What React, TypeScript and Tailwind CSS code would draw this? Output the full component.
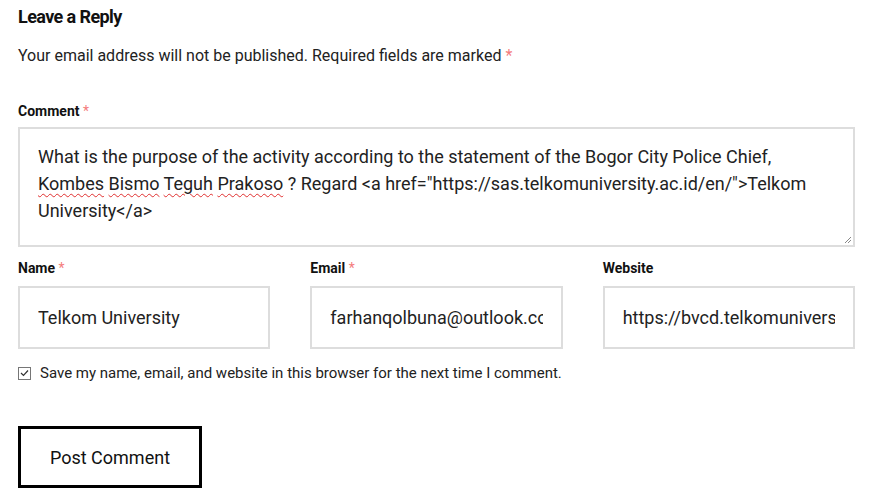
import React from "react";

const Req = () => <span className="text-[#f47c7c] font-normal"> *</span>;

const Field = ({ label, required, value }: { label: string; required?: boolean; value: string }) => (
  <div className="flex flex-col">
    <label className="text-[14px] leading-[20px] font-bold text-[#111] mb-[8px]">
      {label}
      {required && <Req />}
    </label>
    <input
      readOnly
      value={value}
      className="h-[63px] w-full border-2 border-[#dddddd] bg-white px-[18px] text-[18px] text-[#222] outline-none"
    />
  </div>
);

const Typo = ({ children }: { children: React.ReactNode }) => (
  <span className="underline decoration-wavy decoration-[#e03030] decoration-1 underline-offset-[3px]">{children}</span>
);

const App = () => {
  return (
    <div
      className="w-[873px] h-[503px] bg-white px-[18px] pt-[5px] text-[#222]"
      style={{ fontFamily: "Roboto, 'Liberation Sans', sans-serif" }}
    >
      <h3 className="text-[18px] leading-[24px] font-bold text-[#111] tracking-[-0.6px]">Leave a Reply</h3>

      <p className="mt-[16px] text-[16px] leading-[22px]">
        Your email address will not be published. Required fields are marked
        <Req />
      </p>

      <label className="block mt-[34px] text-[14px] leading-[20px] font-bold text-[#111]">
        Comment
        <Req />
      </label>

      <div className="relative mt-[6px] h-[120px] border-2 border-[#dddddd] px-[18px] pt-[14px] text-[18px] leading-[27px]">
        What is the purpose of the activity according to the statement of the Bogor City Police Chief,{" "}
        <Typo>Kombes</Typo> <Typo>Bismo</Typo> <Typo>Teguh</Typo> <Typo>Prakoso</Typo>{" "}
        ? Regard &lt;a href="https://sas.telkomuniversity.ac.id/en/"&gt;Telkom University&lt;/a&gt;
        <svg className="absolute right-[1px] bottom-[1px]" width="9" height="9" viewBox="0 0 9 9">
          <path d="M8 2 L2 8 M8 5 L5 8" stroke="#888" strokeWidth="1" />
        </svg>
      </div>

      <div className="mt-[11px] grid grid-cols-3 gap-[40px]">
        <Field label="Name" required value="Telkom University" />
        <Field label="Email" required value="farhanqolbuna@outlook.com" />
        <Field label="Website" value="https://bvcd.telkomuniversity.ac.id" />
      </div>

      <div className="mt-[14px] flex items-center gap-[9px] text-[15px] leading-[20px]">
        <span className="flex h-[13px] w-[13px] items-center justify-center border border-[#767676] bg-white">
          <svg width="9" height="8" viewBox="0 0 9 8">
            <path d="M1 4 L3.5 6.5 L8 1.5" fill="none" stroke="#333" strokeWidth="1.2" />
          </svg>
        </span>
        Save my name, email, and website in this browser for the next time I comment.
      </div>

      <button className="mt-[43px] h-[62px] w-[184px] border-[3px] border-black bg-white text-[18px] text-[#111]">
        Post Comment
      </button>
    </div>
  );
};

export default App;
